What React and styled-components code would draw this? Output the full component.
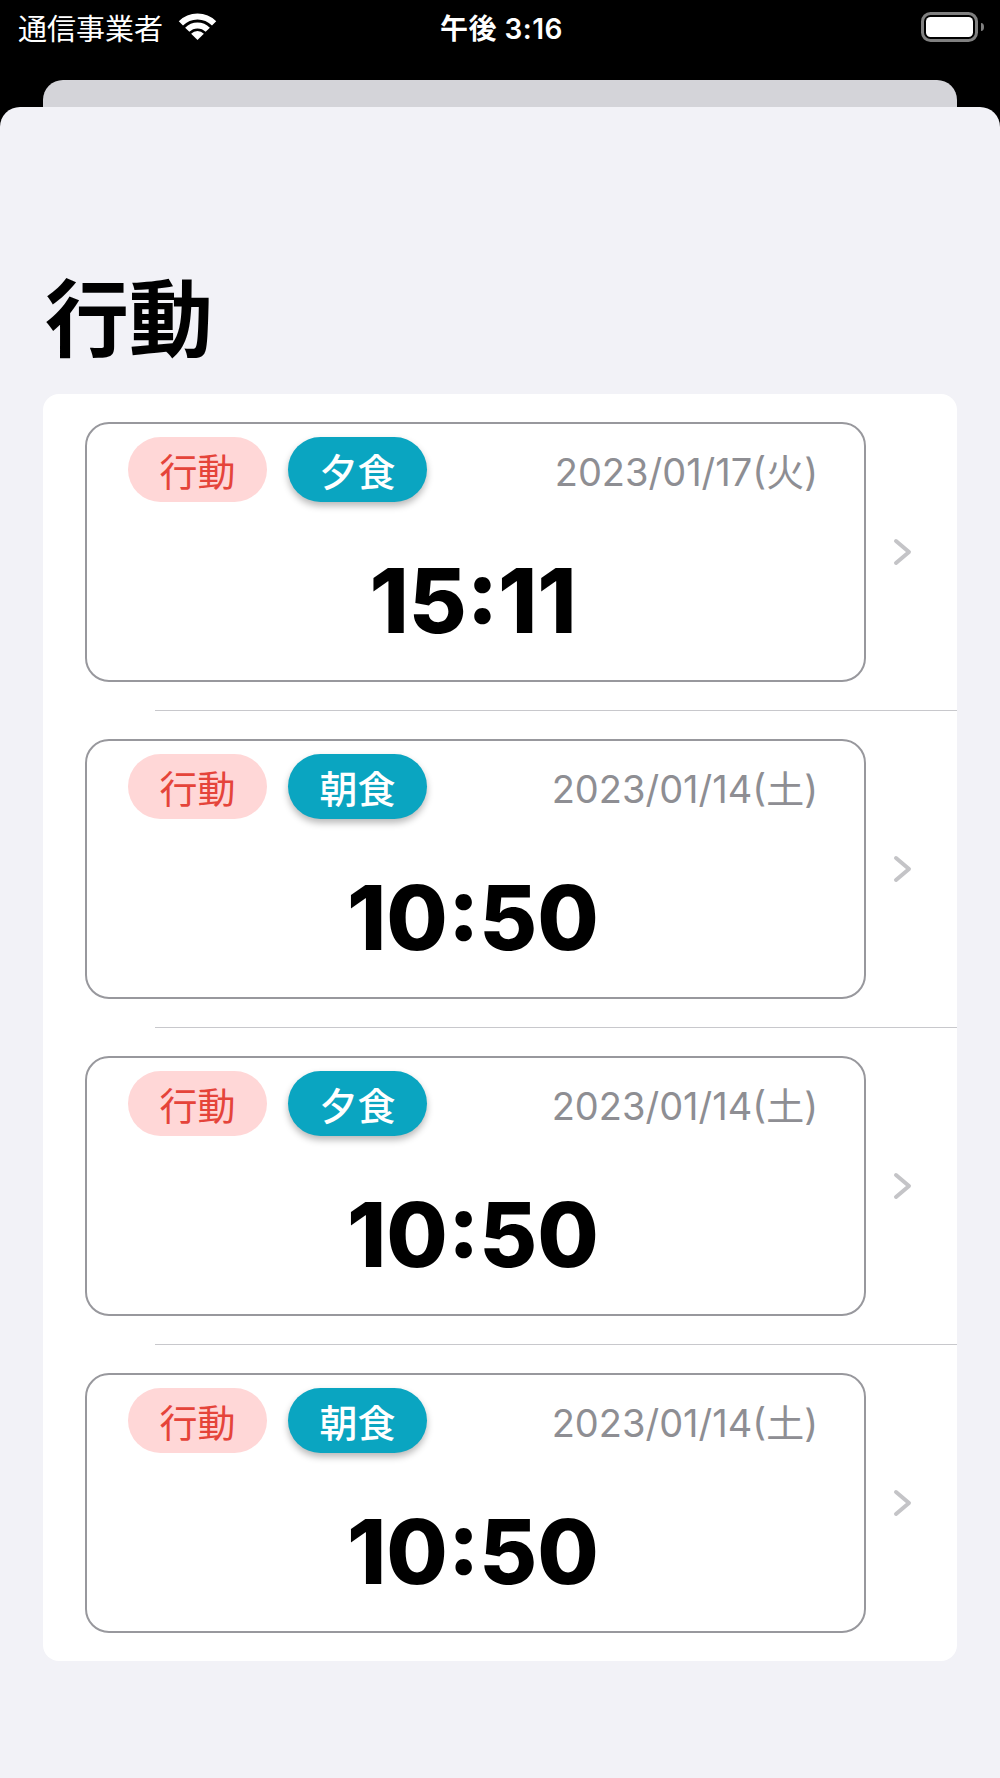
import React from "react";
import styled, { createGlobalStyle } from "styled-components";

const GlobalStyle = createGlobalStyle`
  html, body {
    margin: 0;
    padding: 0;
    background: #f2f2f7;
  }
  * {
    box-sizing: border-box;
  }
`;

const Screen = styled.div`
  width: 1000px;
  min-height: 1778px;
  background: #000;
  display: flex;
  flex-direction: column;
  font-family: Inter, "Noto Sans CJK JP", sans-serif;
`;

const StatusBar = styled.div`
  height: 54px;
  padding: 0 15px 0 18px;
  display: grid;
  grid-template-columns: 1fr auto 1fr;
  align-items: center;
  color: #fff;
`;

const Carrier = styled.div`
  display: flex;
  align-items: center;
  gap: 15px;
  font-family: "Noto Sans CJK JP", sans-serif;
  font-size: 29px;
  font-weight: 400;
`;

const Clock = styled.div`
  font-size: 28px;
  font-weight: 600;
  letter-spacing: 0.5px;
`;

const BatteryWrap = styled.div`
  display: flex;
  justify-content: flex-end;
`;

const BackSheet = styled.div`
  margin: 26px 43px 0;
  height: 27px;
  background: #d4d4d9;
  border-radius: 20px 20px 0 0;
`;

const Sheet = styled.div`
  flex: 1;
  background: #f2f2f7;
  border-radius: 20px 20px 0 0;
  padding: 0 43px 80px;
`;

const Title = styled.h1`
  margin: 165px 0 38px 2px;
  font-family: "Noto Sans CJK JP", sans-serif;
  font-size: 84px;
  font-weight: 700;
  line-height: 1;
  color: #000;
`;

const Group = styled.div`
  background: #fff;
  border-radius: 16px;
  overflow: hidden;
`;

const Row = styled.div`
  display: flex;
  align-items: center;
  padding: 28px 0 28px 42px;
`;

const Separator = styled.div`
  height: 1px;
  margin-left: 112px;
  background: #c8c8cc;
`;

const Card = styled.div`
  width: 781px;
  height: 260px;
  border: 2px solid #98989d;
  border-radius: 24px;
  padding: 13px 46px 0 41px;
  display: flex;
  flex-direction: column;
`;

const CardHeader = styled.div`
  display: flex;
  align-items: center;
  gap: 21px;
`;

const Pill = styled.span`
  width: 139px;
  height: 65px;
  border-radius: 33px;
  display: flex;
  align-items: center;
  justify-content: center;
  font-family: "Noto Sans CJK JP", sans-serif;
  font-size: 38px;
  line-height: 1;
  background: ${(p) => (p.$variant === "meal" ? "#0aa5c1" : "#ffd7d7")};
  color: ${(p) => (p.$variant === "meal" ? "#fff" : "#e5443a")};
  font-weight: ${(p) => (p.$variant === "meal" ? 500 : 400)};
  box-shadow: ${(p) =>
    p.$variant === "meal" ? "0 4px 7px rgba(0, 0, 0, 0.28)" : "none"};
`;

const DateText = styled.span`
  margin-left: auto;
  font-size: 38px;
  font-weight: 400;
  color: #8e8e93;
`;

const Time = styled.div`
  margin-top: 54px;
  text-align: center;
  font-size: 89px;
  font-weight: 800;
  line-height: 1;
  color: #000;
`;

const Chevron = styled.svg`
  margin-left: 27px;
  flex-shrink: 0;
`;

function WifiIcon() {
  const cx = 19.5;
  const cy = 27;
  const arc = (r) => {
    const d = r * Math.SQRT1_2;
    return `M ${cx - d} ${cy - d} A ${r} ${r} 0 0 1 ${cx + d} ${cy - d}`;
  };
  const w = 9 * Math.SQRT1_2;
  return (
    <svg width="39" height="28" viewBox="0 0 39 28">
      <path d={arc(23.5)} fill="none" stroke="#fff" strokeWidth="6" />
      <path d={arc(14.5)} fill="none" stroke="#fff" strokeWidth="6" />
      <path
        d={`M ${cx} ${cy} L ${cx - w} ${cy - w} A 9 9 0 0 1 ${cx + w} ${cy - w} Z`}
        fill="#fff"
      />
    </svg>
  );
}

function BatteryIcon() {
  return (
    <svg width="64" height="30" viewBox="0 0 64 30">
      <rect x="1.5" y="1.5" width="54" height="27" rx="8" fill="none" stroke="#808080" strokeWidth="3" />
      <rect x="5" y="5" width="47" height="20" rx="4.5" fill="#fff" />
      <path d="M60 11 a3 4 0 0 1 0 8 z" fill="#808080" />
    </svg>
  );
}

const records = [
  { meal: "夕食", date: "2023/01/17(火)", time: "15:11" },
  { meal: "朝食", date: "2023/01/14(土)", time: "10:50" },
  { meal: "夕食", date: "2023/01/14(土)", time: "10:50" },
  { meal: "朝食", date: "2023/01/14(土)", time: "10:50" },
];

function RecordRow({ record }) {
  return (
    <Row>
      <Card>
        <CardHeader>
          <Pill>行動</Pill>
          <Pill $variant="meal">{record.meal}</Pill>
          <DateText>{record.date}</DateText>
        </CardHeader>
        <Time>{record.time}</Time>
      </Card>
      <Chevron width="20" height="28" viewBox="0 0 20 28">
        <polyline
          points="3,3 16,14 3,25"
          fill="none"
          stroke="#c4c4c7"
          strokeWidth="4"
          strokeLinecap="round"
          strokeLinejoin="round"
        />
      </Chevron>
    </Row>
  );
}

export default function App() {
  return (
    <>
      <GlobalStyle />
      <Screen>
        <StatusBar>
          <Carrier>
            通信事業者
            <WifiIcon />
          </Carrier>
          <Clock>午後 3:16</Clock>
          <BatteryWrap>
            <BatteryIcon />
          </BatteryWrap>
        </StatusBar>
        <BackSheet />
        <Sheet>
          <Title>行動</Title>
          <Group>
            {records.map((r, i) => (
              <React.Fragment key={i}>
                {i > 0 && <Separator />}
                <RecordRow record={r} />
              </React.Fragment>
            ))}
          </Group>
        </Sheet>
      </Screen>
    </>
  );
}
